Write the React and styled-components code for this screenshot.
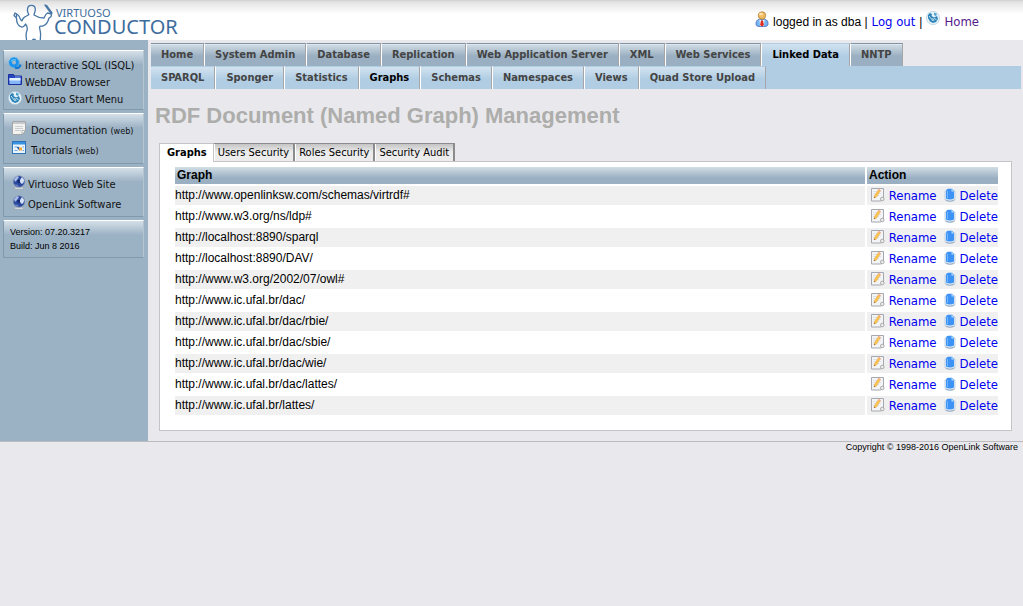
import React from "react";
import styled, { createGlobalStyle } from "styled-components";

const UI = `"DejaVu Sans Condensed", "DejaVu Sans", Verdana, sans-serif`;
const ARIAL = `"Liberation Sans", Arial, Helvetica, sans-serif`;

const GlobalStyle = createGlobalStyle`
  * { box-sizing: border-box; }
  body { margin: 0; background: #e9e9ed; color: #000; font: 12px/16px ${ARIAL}; }
  a { text-decoration: none; }
  svg { display: block; flex: none; }
`;

const Header = styled.header`
  display: flex;
  justify-content: space-between;
  height: 40px;
  padding: 0 44px 0 12px;
  background: linear-gradient(#cfcfcf 0, #e3e3e3 2px, #fff 14px);
`;

const Logo = styled.a`
  display: flex;
  color: #3d6d9e;
`;

const Wordmark = styled.span`
  display: flex;
  flex-direction: column;
  padding-top: 6px;
  font-family: "Noto Sans", "Open Sans", sans-serif;
`;

const WordTop = styled.span`
  padding-left: 2px;
  font-size: 11px;
  line-height: 13px;
`;

const WordMain = styled.span`
  font-size: 20px;
  line-height: 16px;
`;

const Account = styled.div`
  display: flex;
  align-items: flex-start;
  gap: 4px;
  padding-top: 11px;
`;

const AccountText = styled.span`
  padding-top: 3px;
`;

const TextLink = styled.a`
  color: ${(p) => (p.$visited ? "#551a8b" : "#0000ee")};
  font: 13px/16px ${UI};
`;

const AccountLink = styled(TextLink)`
  padding-top: 3px;
`;

const Body = styled.div`
  display: flex;
  min-height: 402px;
  border-bottom: 1px solid #bcbcc0;
`;

const Sidebar = styled.aside`
  display: flex;
  flex-direction: column;
  gap: 3px;
  width: 148px;
  flex: none;
  padding: 10px 4px 10px 3px;
  background: #9bb1c4;
`;

const SideBox = styled.section`
  padding: ${(p) => p.$pad};
  border: 1px solid #8199ac;
  border-top-color: #fff;
  border-right-color: #b4c5d2;
  background: linear-gradient(#d5e0e8, #9bb1c4 14px);
`;

const SideLink = styled.a`
  display: flex;
  align-items: center;
  gap: ${(p) => p.$gap}px;
  height: ${(p) => p.$height}px;
  color: #111;
  font: 11px/16px ${UI};
  white-space: nowrap;

  svg { align-self: flex-start; }
`;

const Small = styled.small`
  font-size: 9px;
`;

const Info = styled.p`
  margin: 0;
  font-size: 9px;
  line-height: 14px;
`;

const Main = styled.main`
  flex: 1;
  min-width: 0;
  padding: 3px 2px 10px 3px;
`;

const Nav = styled.nav`
  display: flex;
  height: 23px;
  background: ${(p) => (p.$sub ? "#b0cde3" : "transparent")};
`;

const NavTab = styled.a`
  padding: 0 10px;
  border-right: 1px solid #a5a5a8;
  border-top: 1px solid ${(p) => (p.$sub || p.$active ? "#b0cde3" : "#8094a8")};
  box-shadow: inset 0 1px ${(p) => (p.$sub || p.$active ? "transparent" : "#dfe8ee")};
  background: ${(p) =>
    p.$sub || p.$active
      ? "linear-gradient(#d3e3f0, #b0cde3 12px)"
      : "linear-gradient(#d3dee5, #9ab0c2 12px)"};
  color: ${(p) => (p.$active ? "#000" : "#444")};
  font: bold 11px/21px ${UI};
  white-space: nowrap;

  & + & { border-left: 1px solid #fff; }
`;

const Title = styled.h1`
  margin: 0;
  padding: 14px 4px;
  color: #adadab;
  font-size: 22px;
  line-height: 26px;
`;

const Panel = styled.section`
  padding: 0 9px 0 8px;
`;

const Tabs = styled.div`
  display: flex;
  align-items: flex-end;
`;

const Tab = styled.button`
  position: relative;
  margin: 0;
  padding: ${(p) => (p.$active ? "0 6px 0 7px" : "0 4px")};
  height: ${(p) => (p.$active ? 19 : 18)}px;
  margin-bottom: ${(p) => (p.$active ? -1 : 0)}px;
  border: 1px solid ${(p) => (p.$active ? "#c4c4c6" : "#8c8c8c")};
  border-width: ${(p) => (p.$active ? "1px 1px 0" : "1px 2px 0 0")};
  background: ${(p) => (p.$active ? "#fff" : "linear-gradient(#c4c4c4, #ececec 8px)")};
  box-shadow: ${(p) => (p.$active ? "none" : "inset 1px 0 #fff")};
  color: #000;
  font: ${(p) => (p.$active ? "bold" : "normal")} 11px/16px ${UI};
  white-space: nowrap;
`;

const Sheet = styled.div`
  padding: 3px 11px 13px 13px;
  border: 1px solid #c4c4c6;
  background: #fff;
`;

const Table = styled.table`
  width: 100%;
  border-spacing: 2px;

  th, td { height: 19px; padding: 0; text-align: left; line-height: 19px; }
  th { height: 17px; padding: 0 2px; line-height: 17px; background: linear-gradient(#d3dee5, #9ab0c2 11px); }
  th:last-child { width: 131px; }
  tbody tr:nth-child(odd) td { background: #f0f0f0; }
`;

const Actions = styled.div`
  display: flex;
  align-items: flex-start;
  justify-content: flex-end;
  gap: 4px;
  height: 19px;
  padding-top: 2px;
`;

const ActionLink = styled(TextLink)`
  &:not(:last-child) { margin-right: 3px; }
`;

const Footer = styled.footer`
  padding: 0 5px;
  font-size: 9px;
  line-height: 11px;
  text-align: right;
`;

const ConductorFigure = () => (
  <svg width="42" height="40" viewBox="0 0 42 40" fill="none" stroke="#4877a6" strokeWidth="1.3" strokeLinejoin="round" strokeLinecap="round" aria-hidden="true">
    <path d="M16.700 14.500 C16.500 13 15 12 15.500 9.500 C15.500 4 23 4 23.300 9 C23.500 12 22 13 22 15 C25 17 29 18 32 18 C33 16 33.500 14 35.500 13 L39.500 14 C40 17 38 17.500 37 18 C36 22 34 25 31 26 C29 26.500 28 25.500 27.500 27 C28 31 29 33 28.500 36 L28.300 40" />
    <path d="M16.700 14.500 C16 16 13 16 11.500 18 C10 20 10 22 9 20 C7.500 18 7.500 16 6 15 L3 13 L2 15.500 L4.500 18 C4.500 22 6 26 9.500 27 C12 27.500 13 25 13.500 24 C15 26 16 29 14.500 32 C13.500 35 14.500 38 14.500 40" />
    <path d="M4.500 14 V17 M33 5 L39.500 14 M33 5 L34.500 5.500 L40 13" />
    <path d="M20.500 40 Q22 38.500 23.500 40" />
  </svg>
);

const UserIcon = () => (
  <svg width="14" height="16" viewBox="0 0 14 16" aria-hidden="true">
    <path d="M1 13c0-4 2-5 6-5s6 1 6 5c0 2-1 2.500-6 2.500S1 15 1 13Z" fill="#74b5f4" stroke="#4464b8" strokeWidth=".8" />
    <path d="M4.500 8.500 7 10l2.500-1.500L9 15H5Z" fill="#fff" />
    <path d="M6 9.500h2L9 14l-2 1.500L5 14Z" fill="#dd2d25" />
    <circle cx="7" cy="4.500" r="3.700" fill="#f4bd61" stroke="#ad7834" strokeWidth=".8" />
    <ellipse cx="6" cy="3" rx="2" ry="1.200" fill="#fde4ad" />
  </svg>
);

const GlobeHome = () => (
  <svg width="14" height="14" viewBox="0 0 14 14" aria-hidden="true">
    <circle cx="7" cy="7" r="6.600" fill="#e6f2f8" stroke="#a6c5da" strokeWidth=".6" />
    <path d="M2 4 4 2 6 3 5.500 5 8 6.500 11 5 12 8 10 11 7 12 4 10.500 2 7Z" fill="#2c83b8" />
    <path d="M8 1.500 11 3l-1 2L8 4Z" fill="#46a0d0" />
    <path d="M3 5l4 5M8 7.500l2.500 1M6.500 7l1.500 3" stroke="#d5edf8" strokeWidth=".9" />
  </svg>
);

const GearIcon = () => (
  <svg width="14" height="14" viewBox="0 0 14 14" fill="none" aria-hidden="true">
    <circle cx="6" cy="5.500" r="3.500" stroke="#1c93ec" strokeWidth="3" />
    <circle cx="6" cy="5.500" r="5" stroke="#32aef7" strokeWidth="1" strokeDasharray="2 1.140" />
    <path d="M7 10.500q4.500 1.500 5.500-3" stroke="#1379d2" strokeWidth="2.400" />
    <path d="M3 4q2-2 5-1" stroke="#7fd3ff" />
  </svg>
);

const FolderIcon = () => (
  <svg width="14" height="14" viewBox="0 0 14 14" aria-hidden="true">
    <path d="M.5.5h5l1 1.500h7v8.500H.5Z" fill="#2747bd" stroke="#1d2f9c" />
    <path d="M1.500 4.500h11V10h-11Z" fill="#85b7f8" />
    <path d="M1.500 4h11v2.500h-11Z" fill="#e5f2ff" />
    <path d="M7 3h5.500" stroke="#7da5f2" />
  </svg>
);

const DocIcon = () => (
  <svg width="14" height="14" viewBox="0 0 14 14" aria-hidden="true">
    <path d="M.5.500h13v9L10 13.500H.5Z" fill="#f2f2f1" stroke="#a3a5a7" />
    <path d="M1 1h12v2H1Z" fill="#c6c9cb" />
    <path d="M3 5.500h8M3 7.500h8M3 9.500h6" stroke="#cbcdd0" />
    <path d="M13.500 9.500H10v4Z" fill="#fff" stroke="#9b9b9b" strokeWidth=".7" />
  </svg>
);

const TutorialIcon = () => (
  <svg width="14" height="14" viewBox="0 0 14 14" aria-hidden="true">
    <rect x=".5" y=".5" width="13" height="12" fill="#eaf4fc" stroke="#2f73b9" />
    <path d="M1 1h12v2.500H1Z" fill="#3a92e2" />
    <path d="M2.500 6h3M2.500 9.500h3M10.500 6h1.500M10.500 9.500h1.500" stroke="#6ba6de" />
    <path d="M5.500 6l2.500 3" stroke="#2459a5" strokeWidth="1.800" />
    <rect x="7" y="6.500" width="3" height="3" fill="#f1a73c" />
  </svg>
);

const WebIcon = () => (
  <svg width="14" height="15" viewBox="0 0 14 15" aria-hidden="true">
    <ellipse cx="7" cy="13.300" rx="5" ry="1.200" fill="#d8dde0" stroke="#8793a0" strokeWidth=".5" />
    <circle cx="7" cy="6.500" r="5.700" fill="#2b499f" stroke="#8190b0" strokeWidth=".6" />
    <path d="M2 4 5 1l2 1-2 3-2 2Z" fill="#a8bce5" />
    <path d="M8 5 10 2l2.300 3-1 3-1.500 1L8 7Z" fill="#d5e0f5" />
    <path d="M3 9l3 1 1 2-3-1Z" fill="#6681c6" />
    <path d="M5 5h3v3H6Z" fill="#142a73" />
  </svg>
);

const RenameIcon = () => (
  <svg width="14" height="14" viewBox="0 0 14 14" aria-hidden="true">
    <path d="M.5.500h12v10l-2.500 2.500H.5Z" fill="#f3f4f6" stroke="#a5a8b0" />
    <path d="M2 3.500h8M2 5.500h8M2 7.500h6" stroke="#dfe2e7" />
    <path d="M3 10 3.500 7.500 7.500 1.500l2 1L5.500 9Z" fill="#fbc64b" stroke="#e3a552" strokeWidth=".5" />
    <path d="M7 2 7.800 1l2 1.200-.6 1Z" fill="#f6a98b" />
    <path d="M3 10l.3-1.300 1.200.6Z" fill="#6c4b2a" />
    <circle cx="11.300" cy="11" r="1.800" fill="#eee" stroke="#9a9a9a" strokeWidth=".8" />
  </svg>
);

const DeleteIcon = () => (
  <svg width="12" height="14" viewBox="0 0 12 14" aria-hidden="true">
    <path d="M1 3h10v8.500q-1 2-5 2t-5-2Z" fill="#e3eefa" stroke="#b3c7dd" strokeWidth=".8" />
    <path d="M2 3.500Q2 .8 4 .8h4L10 3v7.500q-4 2-8 0Z" fill="#3c93f5" />
    <path d="M7.500.8V3.500H10Z" fill="#b9dcff" />
    <path d="M3.500 3v7" stroke="#72b5fc" />
    <path d="M1.500 12q4.500 2.500 9 0" fill="none" stroke="#9fb0c2" />
  </svg>
);

const topTabs = ["Home", "System Admin", "Database", "Replication", "Web Application Server", "XML", "Web Services", "Linked Data", "NNTP"];
const subTabs = ["SPARQL", "Sponger", "Statistics", "Graphs", "Schemas", "Namespaces", "Views", "Quad Store Upload"];
const sheetTabs = ["Graphs", "Users Security", "Roles Security", "Security Audit"];
const graphs = [
  "http://www.openlinksw.com/schemas/virtrdf#",
  "http://www.w3.org/ns/ldp#",
  "http://localhost:8890/sparql",
  "http://localhost:8890/DAV/",
  "http://www.w3.org/2002/07/owl#",
  "http://www.ic.ufal.br/dac/",
  "http://www.ic.ufal.br/dac/rbie/",
  "http://www.ic.ufal.br/dac/sbie/",
  "http://www.ic.ufal.br/dac/wie/",
  "http://www.ic.ufal.br/dac/lattes/",
  "http://www.ic.ufal.br/lattes/",
];

export default function App() {
  return (
    <>
      <GlobalStyle />
      <Header>
        <Logo href="#">
          <ConductorFigure />
          <Wordmark>
            <WordTop>VIRTUOSO</WordTop>
            <WordMain>CONDUCTOR</WordMain>
          </Wordmark>
        </Logo>
        <Account>
          <UserIcon />
          <AccountText>logged in as dba |</AccountText>
          <AccountLink href="#logout">Log out</AccountLink>
          <AccountText>|</AccountText>
          <GlobeHome />
          <AccountLink href="#home" $visited>Home</AccountLink>
        </Account>
      </Header>
      <Body>
        <Sidebar>
          <SideBox $pad="6px 0 1px 4px">
            <SideLink href="#isql" $gap={3} $height={17}><GearIcon />Interactive SQL (ISQL)</SideLink>
            <SideLink href="#webdav" $gap={3} $height={17}><FolderIcon />WebDAV Browser</SideLink>
            <SideLink href="#start" $gap={3} $height={17}><GlobeHome />Virtuoso Start Menu</SideLink>
          </SideBox>
          <SideBox $pad="7px 0 2px 8px">
            <SideLink href="#docs" $gap={5} $height={20}><DocIcon /><span>Documentation <Small>(web)</Small></span></SideLink>
            <SideLink href="#tutorials" $gap={5} $height={20}><TutorialIcon /><span>Tutorials <Small>(web)</Small></span></SideLink>
          </SideBox>
          <SideBox $pad="7px 0 1px 8px">
            <SideLink href="#virtuoso" $gap={2} $height={20}><WebIcon />Virtuoso Web Site</SideLink>
            <SideLink href="#openlink" $gap={2} $height={20}><WebIcon />OpenLink Software</SideLink>
          </SideBox>
          <SideBox $pad="4px 0 4px 6px">
            <Info>Version: 07.20.3217</Info>
            <Info>Build: Jun 8 2016</Info>
          </SideBox>
        </Sidebar>
        <Main>
          <Nav>
            {topTabs.map((t) => (
              <NavTab key={t} href="#" $active={t === "Linked Data"}>{t}</NavTab>
            ))}
          </Nav>
          <Nav $sub>
            {subTabs.map((t) => (
              <NavTab key={t} href="#" $sub $active={t === "Graphs"}>{t}</NavTab>
            ))}
          </Nav>
          <Title>RDF Document (Named Graph) Management</Title>
          <Panel>
            <Tabs>
              {sheetTabs.map((t, i) => (
                <Tab key={t} type="button" $active={i === 0}>{t}</Tab>
              ))}
            </Tabs>
            <Sheet>
              <Table>
                <thead>
                  <tr><th>Graph</th><th>Action</th></tr>
                </thead>
                <tbody>
                  {graphs.map((g) => (
                    <tr key={g}>
                      <td>{g}</td>
                      <td>
                        <Actions>
                          <RenameIcon />
                          <ActionLink href="#rename">Rename</ActionLink>
                          <DeleteIcon />
                          <ActionLink href="#delete">Delete</ActionLink>
                        </Actions>
                      </td>
                    </tr>
                  ))}
                </tbody>
              </Table>
            </Sheet>
          </Panel>
        </Main>
      </Body>
      <Footer>Copyright © 1998-2016 OpenLink Software</Footer>
    </>
  );
}
